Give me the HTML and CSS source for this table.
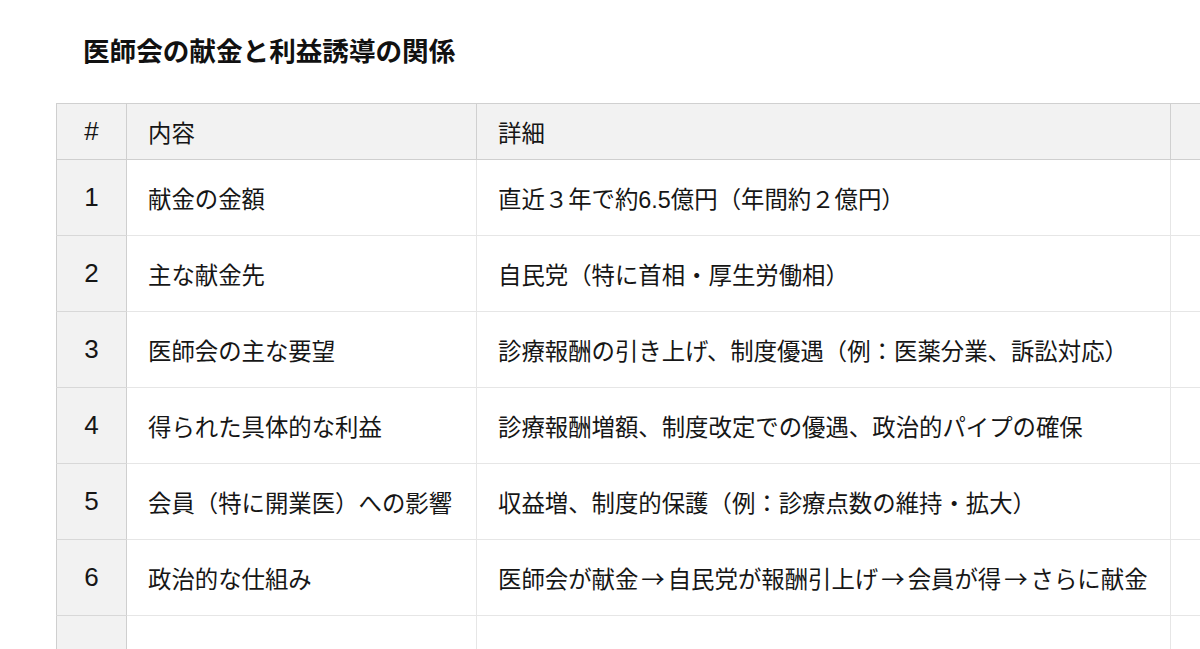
FILE: index.html
```html
<!DOCTYPE html>
<html lang="ja">
<head>
<meta charset="utf-8">
<link rel="stylesheet" href="styles.css">
</head>
<body>
<div class="page">
  <h1 class="title">医師会の献金と利益誘導の関係</h1>
  <table class="grid">
    <colgroup>
      <col class="c-num"><col class="c-item"><col class="c-detail"><col class="c-extra">
    </colgroup>
    <thead>
      <tr><th class="num">#</th><th>内容</th><th>詳細</th><th></th></tr>
    </thead>
    <tbody>
      <tr><td class="num">1</td><td>献金の金額</td><td>直近３年で約6.5億円（年間約２億円）</td><td></td></tr>
      <tr><td class="num">2</td><td>主な献金先</td><td>自民党（特に首相・厚生労働相）</td><td></td></tr>
      <tr><td class="num">3</td><td>医師会の主な要望</td><td>診療報酬の引き上げ、制度優遇（例：医薬分業、訴訟対応）</td><td></td></tr>
      <tr><td class="num">4</td><td>得られた具体的な利益</td><td>診療報酬増額、制度改定での優遇、政治的パイプの確保</td><td></td></tr>
      <tr><td class="num">5</td><td>会員（特に開業医）への影響</td><td>収益増、制度的保護（例：診療点数の維持・拡大）</td><td></td></tr>
      <tr><td class="num">6</td><td>政治的な仕組み</td><td>医師会が献金<span class="arrow">→</span>自民党が報酬引上げ<span class="arrow">→</span>会員が得<span class="arrow">→</span>さらに献金</td><td></td></tr>
      <tr><td class="num"></td><td></td><td></td><td></td></tr>
    </tbody>
  </table>
</div>
</body>
</html>
```

FILE: styles.css
```css
html, body {
  margin: 0;
  padding: 0;
  background: #ffffff;
  overflow: hidden;
}
body {
  font-family: "Liberation Sans", "Noto Sans CJK JP", sans-serif;
  color: #161616;
}
.page {
  padding: 33px 0 0 56px;
  width: 1400px;
}
.title {
  margin: 0 0 36px 27px;
  font-family: "Noto Sans CJK JP", sans-serif;
  font-size: 26.6px;
  line-height: 34px;
  font-weight: 700;
  color: #111;
}
.grid {
  border-collapse: collapse;
  table-layout: fixed;
  width: 1314px;
  font-size: 23.4px;
}
.c-num { width: 70px; }
.c-item { width: 350px; }
.c-detail { width: 694px; }
.c-extra { width: 200px; }
.grid th, .grid td {
  text-align: left;
  padding: 0 0 0 21px;
  border: 1px solid #e6e6e6;
  font-weight: 400;
  white-space: nowrap;
}
.grid th {
  height: 55px;
  background: #f2f2f2;
  border-color: #d0d0d0;
  border-bottom: 1px solid #cfcfcf;
}
.grid td {
  height: 75px;
}
.grid th.num, .grid td.num {
  text-align: center;
  padding: 0;
  font-size: 26px;
  background: #f2f2f2;
  border-left: 1px solid #cfcfcf;
  border-right: 1px solid #cfcfcf;
}
.grid tbody td.num {
  border-bottom-color: #d8d8d8;
}
.arrow {
  font-family: "Noto Sans CJK JP", sans-serif;
  margin: 0 3px;
}
```
